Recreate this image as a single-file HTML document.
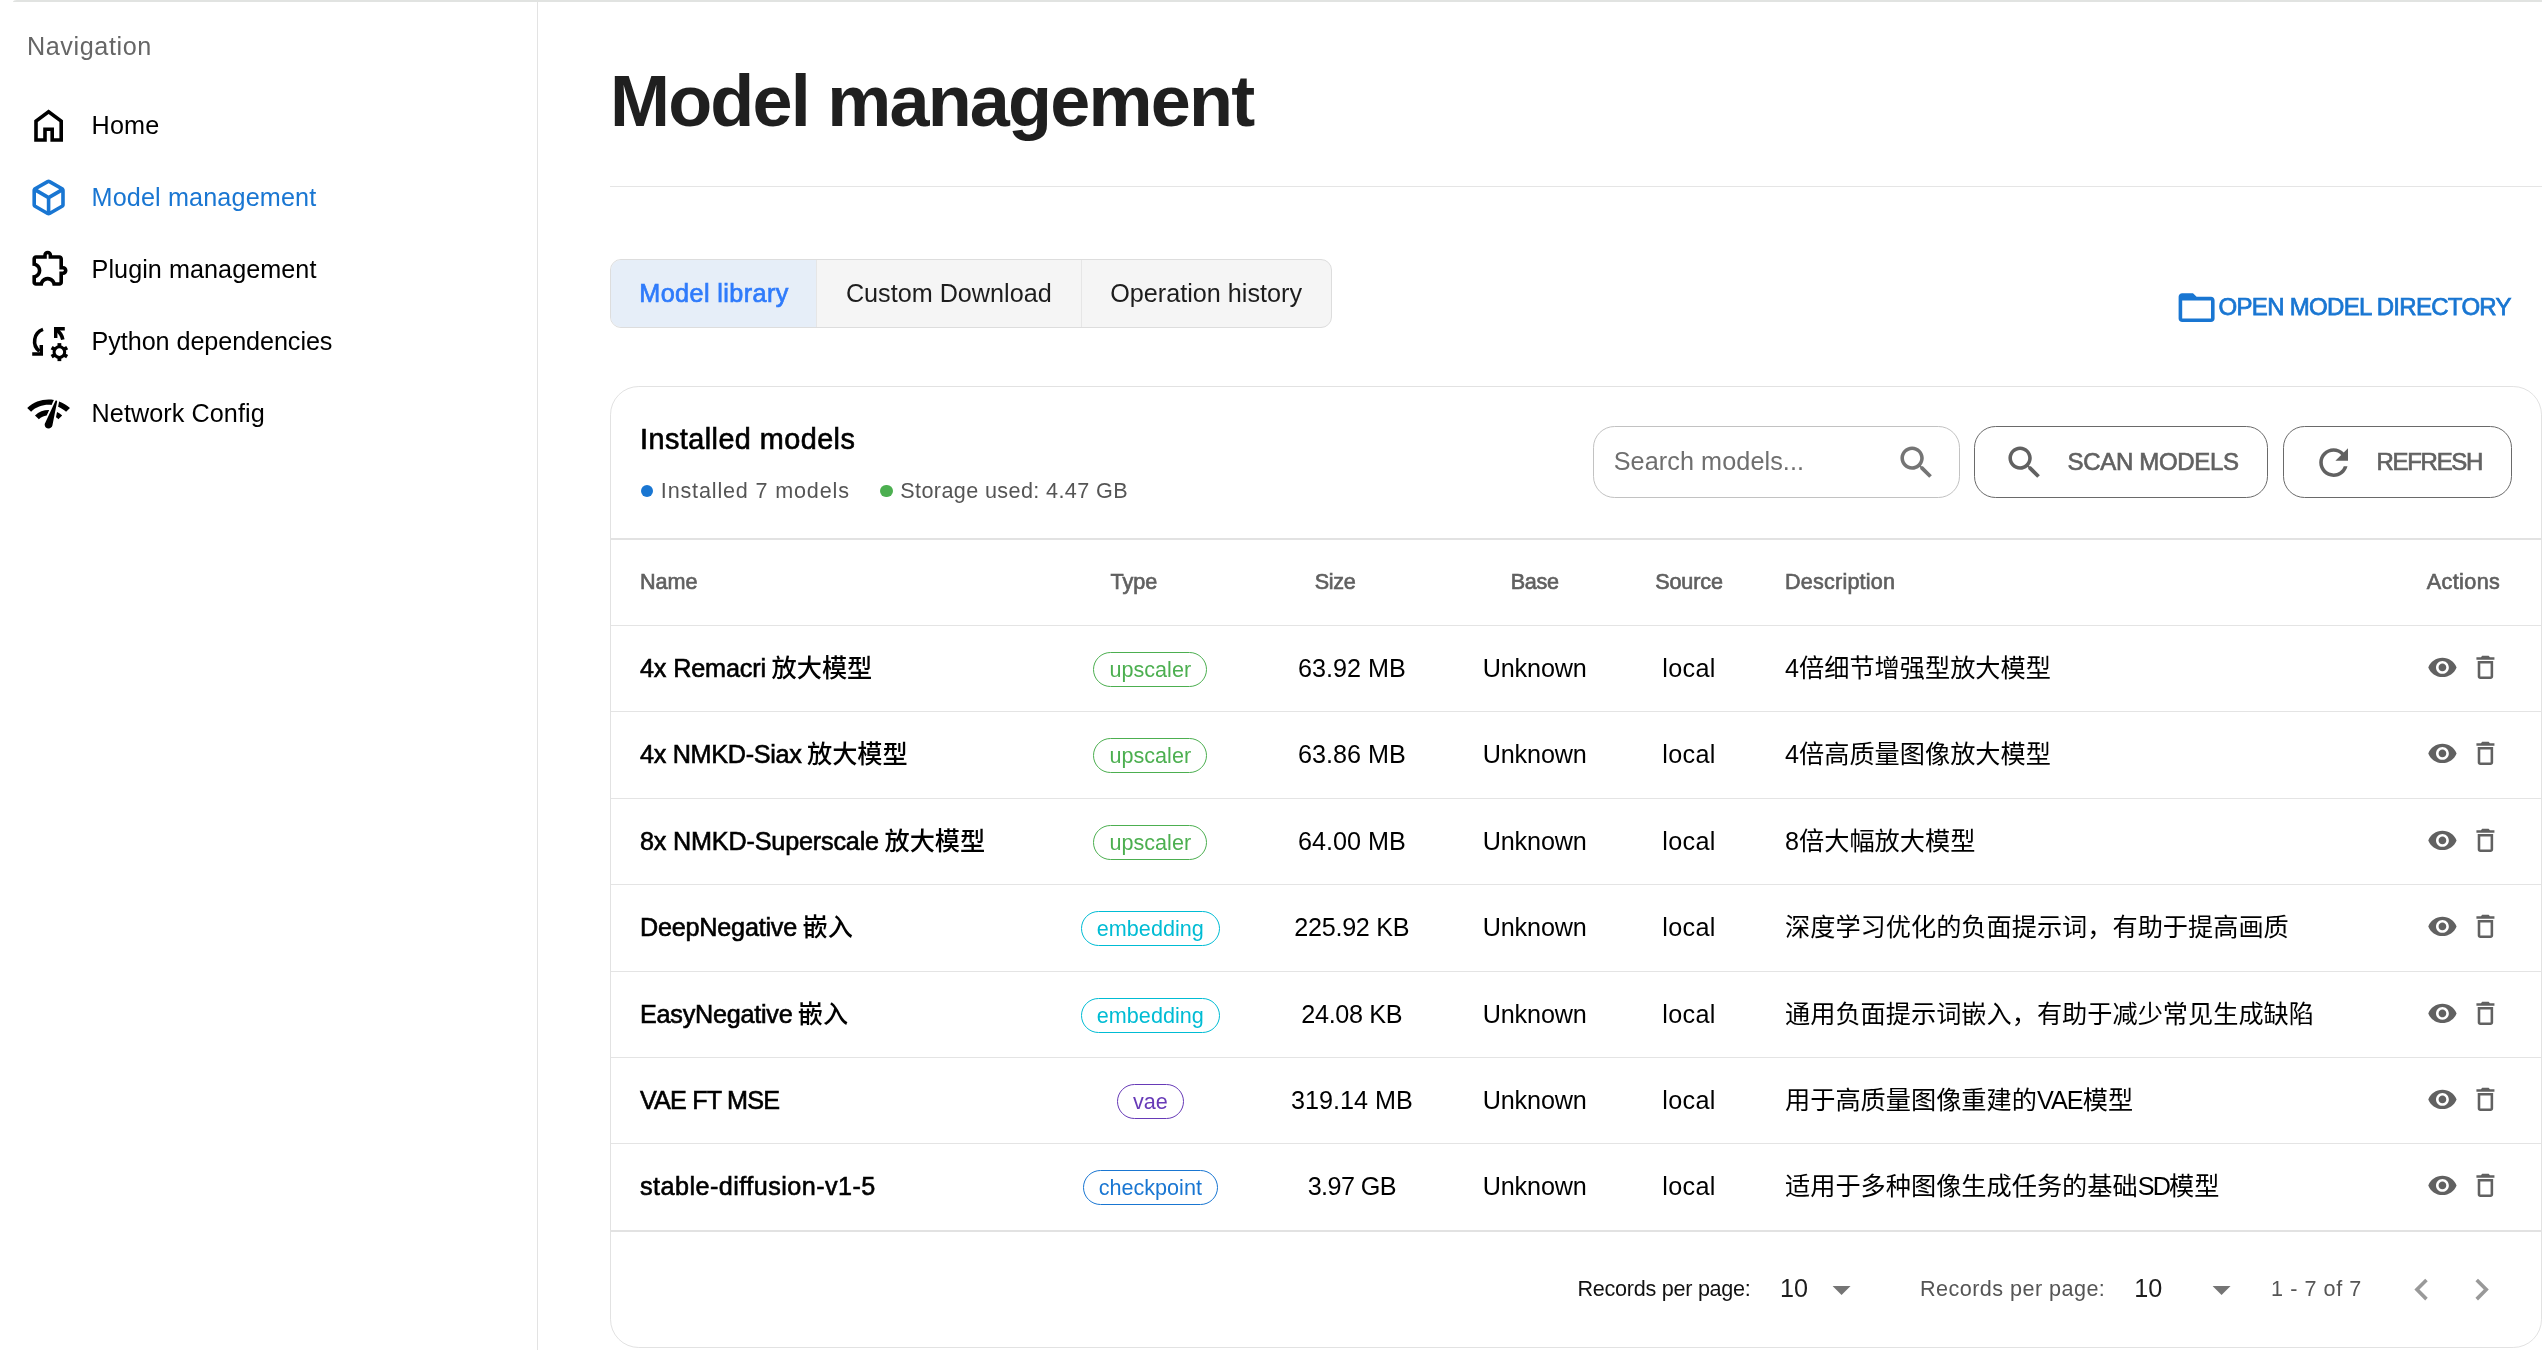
<!DOCTYPE html>
<html lang="en">
<head>
<meta charset="utf-8">
<title>Model management</title>
<style>
:root{
  --ff:"Liberation Sans","Noto Sans CJK SC",sans-serif;
  --primary:#1976d2;
}
*{box-sizing:border-box;margin:0;padding:0}
html,body{width:2542px;height:1350px;overflow:hidden;background:#fff}
body{font-family:var(--ff);color:#000;position:relative;-webkit-font-smoothing:antialiased;will-change:transform}
svg{display:block}
.abs{position:absolute}
.t{position:absolute;white-space:pre;line-height:1}
/* top bar */
.topbar{position:absolute;left:13px;top:0;right:0;height:2px;background:#e1e3e1;border-top-left-radius:4px 2px}
/* drawer */
.drawer{position:absolute;left:0;top:2px;width:538px;bottom:0;border-right:1px solid #e3e3e3;background:#fff}
.navhead{position:absolute;left:27px;top:28.5px;font-size:25.2px;line-height:30px;color:#666;letter-spacing:.58px;white-space:pre}
.nav{position:absolute;left:0;width:537px;height:72px}
.nav svg{position:absolute;left:26.8px;top:14.4px;width:43.2px;height:43.2px;fill:#000}
.nav span{position:absolute;left:91.6px;top:-1px;line-height:72px;font-size:25.2px;white-space:pre;color:#000}
.nav.on svg{fill:var(--primary)}
.nav.on span{color:var(--primary)}
/* main */
h1{position:absolute;left:610px;top:58.6px;font-size:72px;line-height:84px;font-weight:700;color:#1f1f1f;white-space:pre;letter-spacing:-1.8px}
.hr{position:absolute;left:610px;right:0;top:186px;height:1px;background:#e5e5e5}
.tabs{position:absolute;left:610px;top:259px;height:69px;display:flex;border:1px solid #ddd;border-radius:11px;overflow:hidden;background:#f5f5f5}
.tab{height:100%;display:flex;align-items:center;justify-content:center;font-size:25.2px;color:#1d1d1d;border-left:1px solid #e6e6e6;white-space:pre}
.tab:first-child{border-left:0}
.tab.on{background:#e6eef8;color:#2f7bfb;-webkit-text-stroke:.7px #2f7bfb;letter-spacing:.4px;justify-content:flex-start;padding-left:28.3px}
.opendir{position:absolute;left:2175.4px;top:274.9px;height:64.8px;display:flex;align-items:center;color:var(--primary);font-size:24px;-webkit-text-stroke:.75px var(--primary);letter-spacing:-.7px;white-space:pre}
.opendir svg{width:43.2px;height:43.2px;fill:var(--primary)}
/* card */
.card{position:absolute;left:610px;top:386px;width:1932px;height:962px;border:1px solid #e2e2e2;border-radius:28.8px;background:#fff}
.ctitle{position:absolute;left:640px;top:422.4px;font-size:28.8px;line-height:34px;color:#000;white-space:pre}
.med{-webkit-text-stroke:.65px currentColor}
.dot{position:absolute;width:12.6px;height:12.6px;border-radius:50%;top:484.6px}
.cap{position:absolute;top:477.5px;font-size:21.6px;line-height:26px;color:#555;white-space:pre}
.search{position:absolute;left:1593px;top:426px;width:367px;height:72px;border:1px solid #c2c2c2;border-radius:21.6px}
.search span{position:absolute;left:19.7px;top:-1px;line-height:70px;font-size:25.2px;color:#6f6f6f;white-space:pre}
.search svg{position:absolute;left:301px;top:13.5px;width:43.2px;height:43.2px;fill:#757575}
.btn{position:absolute;top:426px;height:72px;border:1px solid #6a6a6a;border-radius:21.6px;color:#616161;font-size:25.2px;white-space:pre}
.btn svg{position:absolute;left:27.7px;top:13.5px;width:43.2px;height:43.2px;fill:#616161}
.btn span{position:absolute;left:92.5px;top:0;line-height:70px}
.hline{position:absolute;left:611px;width:1930px;height:2px;background:#e2e2e2}
.th{position:absolute;top:539px;height:86px;line-height:86px;font-size:21.6px;color:#606060;white-space:pre}
.row{position:absolute;left:611px;width:1930px;height:86.4px;border-top:1px solid #e4e4e4;font-size:25.2px;line-height:86.4px;color:#000}
.c{position:absolute;top:-.8px;height:86.4px;white-space:pre}
.name{left:29px}.name .l{-webkit-text-stroke:.6px #000}.name .k{font-weight:500;margin-left:-1.3px}
.type{left:439.3px;width:200px;text-align:center}
.size{left:640.8px;width:200px;text-align:center}
.base{left:823.7px;width:200px;text-align:center;letter-spacing:-.13px}
.src{left:978px;width:200px;text-align:center;letter-spacing:.34px}
.desc{left:1174px}
.chip{display:inline-block;vertical-align:top;margin-top:27px;height:35px;line-height:34px;border:1px solid;border-radius:18px;padding:0 15px;font-size:21.6px}
.up{color:#4caf50}.em{color:#00bcd4}.va{color:#673ab7}.ck{color:#1976d2}
.row svg{position:absolute;fill:#616161;width:30.87px;height:30.87px;top:26px}
.eye{left:1815.7px}.del{left:1858.7px}
.bt{position:absolute;top:1231px;height:116px;line-height:116px;white-space:pre}
.bsvg{position:absolute;width:43.2px;height:43.2px;top:1267.5px}
</style>
</head>
<body>
<div class="topbar"></div>
<aside class="drawer">
  <div class="navhead">Navigation</div>
  <div class="nav" style="top:87.5px"><svg viewBox="0 0 24 24"><path d="M6 19h3v-6h6v6h3v-9l-6-4.5L6 10Zm-2 2V9l8-6 8 6v12h-7v-6h-2v6Z"/></svg><span style="letter-spacing:.15px">Home</span></div>
  <div class="nav on" style="top:159.5px"><svg viewBox="0 -960 960 960"><path d="M440-183v-274L200-596v274l240 139Zm80 0 240-139v-274L520-457v274Zm-40-343 237-137-237-137-237 137 237 137ZM160-252q-19-11-29.5-29T120-321v-318q0-22 10.5-40t29.5-29l280-161q19-11 40-11t40 11l280 161q19 11 29.5 29t10.5 40v318q0 22-10.5 40T800-252L520-91q-19 11-40 11t-40-11L160-252Zm320-228Z"/></svg><span style="letter-spacing:.13px">Model management</span></div>
  <div class="nav" style="top:231.5px"><svg viewBox="0 -960 960 960"><path d="M352-120H200q-33 0-56.500-23.500T120-200v-152q48 0 84-30.500t36-77.500q0-47-36-77.500T120-568v-152q0-33 23.500-56.500T200-800h160q0-42 29-71t71-29q42 0 71 29t29 71h160q33 0 56.500 23.500T800-720v160q42 0 71 29t29 71q0 42-29 71t-71 29v160q0 33-23.500 56.500T720-120H568q0-50-31.500-85T460-240q-45 0-76.500 35T352-120Zm-152-80h85q24-66 77-93t98-27q45 0 98 27t77 93h85v-240h80q8 0 14-6t6-14q0-8-6-14t-14-6h-80v-240H480v-80q0-8-6-14t-14-6q-8 0-14 6t-6 14v80H200v88q54 20 87 67t33 105q0 57-33 104t-87 68v88Zm260-260Z"/></svg><span style="letter-spacing:.05px">Plugin management</span></div>
  <div class="nav" style="top:303.5px"><svg viewBox="0 0 24 24"><path d="M8.9 5.2A7 7 0 0 0 6.9 17.3" fill="none" stroke="#000" stroke-width="2"/><path d="M2.9 17.9H7V13.9H8.9V19.9H2.9Z"/><path d="M15 3.95H21V5.8H16.9V9.95H15Z"/><path d="M16.3 5.3Q19.3 7.6 19.9 10.9" fill="none" stroke="#000" stroke-width="2"/><g transform="translate(18 17.85)"><circle r="2.95" fill="none" stroke="#000" stroke-width="1.7"/><rect x="-1.05" y="-5" width="2.1" height="2" transform="rotate(0)"/><rect x="-1.05" y="-5" width="2.1" height="2" transform="rotate(60)"/><rect x="-1.05" y="-5" width="2.1" height="2" transform="rotate(120)"/><rect x="-1.05" y="-5" width="2.1" height="2" transform="rotate(180)"/><rect x="-1.05" y="-5" width="2.1" height="2" transform="rotate(240)"/><rect x="-1.05" y="-5" width="2.1" height="2" transform="rotate(300)"/></g></svg><span style="letter-spacing:-.08px">Python dependencies</span></div>
  <div class="nav" style="top:375.5px"><svg viewBox="0 0 24 24" style="transform:scale(1.08,1.03)"><path d="M15.9 5c-.17 0-.32.09-.41.23l-.07.15-5.180 11.650c-.16.29-.26.61-.26.96 0 1.110.9 2.010 2.010 2.010.96 0 1.770-.68 1.960-1.590l.01-.03L16.400 5.500c0-.28-.22-.5-.5-.5zM1 9l2 2c2.880-2.880 6.790-4.080 10.530-3.620l1.190-2.680C9.890 3.840 4.740 5.270 1 9zm20 2l2-2c-1.640-1.640-3.550-2.820-5.590-3.570l-.53 2.820c1.500.62 2.900 1.530 4.120 2.750zm-4 4l2-2c-.8-.8-1.700-1.420-2.660-1.890l-.55 2.920c.42.27.83.59 1.210.97zM5 13l2 2c1.130-1.130 2.560-1.790 4.030-2l1.280-2.880c-2.630-.08-5.300.87-7.310 2.880z"/></svg><span style="letter-spacing:.07px">Network Config</span></div>
</aside>
<h1>Model management</h1>
<div class="hr"></div>
<div class="tabs">
  <div class="tab on" style="width:205px">Model library</div>
  <div class="tab" style="width:264.6px">Custom Download</div>
  <div class="tab" style="width:250px">Operation history</div>
</div>
<div class="opendir"><svg viewBox="0 0 24 24"><path d="M20 6h-8l-2-2H4c-1.100 0-1.990.9-1.990 2L2 18c0 1.100.9 2 2 2h16c1.100 0 2-.9 2-2V8c0-1.100-.9-2-2-2zm0 12H4V8h16v10z"/></svg><span>OPEN MODEL DIRECTORY</span></div>
<div class="card"></div>
<div class="ctitle med" style="letter-spacing:.45px">Installed models</div>
<div class="dot" style="left:640.5px;background:#1976d2"></div>
<div class="cap" style="left:660.8px;letter-spacing:.83px">Installed 7 models</div>
<div class="dot" style="left:880px;background:#4caf50"></div>
<div class="cap" style="left:900.3px;letter-spacing:.38px">Storage used: 4.47 GB</div>
<div class="search"><span style="letter-spacing:.09px">Search models...</span><svg viewBox="0 0 24 24"><path d="M15.5 14h-.79l-.28-.27C15.410 12.590 16 11.110 16 9.500 16 5.910 13.090 3 9.500 3S3 5.910 3 9.500 5.910 16 9.500 16c1.610 0 3.090-.59 4.230-1.570l.27.28v.79l5 4.990L20.490 19l-4.990-5zm-6 0C7.010 14 5 11.990 5 9.500S7.010 5 9.500 5 14 7.010 14 9.500 11.990 14 9.500 14z"/></svg></div>
<div class="btn" style="left:1974px;width:293.7px"><svg viewBox="0 0 24 24"><path d="M15.5 14h-.79l-.28-.27C15.410 12.590 16 11.110 16 9.500 16 5.910 13.090 3 9.500 3S3 5.910 3 9.500 5.910 16 9.500 16c1.610 0 3.090-.59 4.230-1.570l.27.28v.79l5 4.990L20.490 19l-4.990-5zm-6 0C7.010 14 5 11.990 5 9.500S7.010 5 9.500 5 14 7.010 14 9.500 11.990 14 9.500 14z"/></svg><span class="med" style="font-size:24px;letter-spacing:-.32px">SCAN MODELS</span></div>
<div class="btn" style="left:2283px;width:228.8px"><svg viewBox="0 0 24 24"><path d="M17.65 6.350C16.200 4.900 14.210 4 12 4c-4.420 0-7.990 3.580-7.990 8s3.570 8 7.990 8c3.730 0 6.840-2.550 7.730-6h-2.080c-.82 2.330-3.040 4-5.650 4-3.310 0-6-2.690-6-6s2.690-6 6-6c1.660 0 3.140.69 4.220 1.780L13 11h7V4l-2.350 2.350z"/></svg><span class="med" style="font-size:24px;letter-spacing:-1.3px">REFRESH</span></div>
<div class="hline" style="top:538px"></div>
<div class="th med" style="left:640px">Name</div>
<div class="th med" style="left:1110.4px">Type</div>
<div class="th med" style="left:1314.7px;letter-spacing:-.29px">Size</div>
<div class="th med" style="left:1510.7px;letter-spacing:-.31px">Base</div>
<div class="th med" style="left:1655.2px;letter-spacing:-.13px">Source</div>
<div class="th med" style="left:1785px;letter-spacing:.2px">Description</div>
<div class="th med" style="left:2426.7px;letter-spacing:.4px">Actions</div>
<div class="row" style="top:625px"><div class="c name"><span class="l" style="letter-spacing:-0.14px">4x Remacri </span><span class=k>放大模型</span></div><div class="c type"><span class="chip up">upscaler</span></div><div class="c size">63.92 MB</div><div class="c base">Unknown</div><div class="c src">local</div><div class="c desc">4倍细节增强型放大模型</div><svg class="eye" viewBox="0 0 24 24"><path d="M12 4.5C7 4.5 2.73 7.61 1 12c1.73 4.39 6 7.5 11 7.5s9.27-3.11 11-7.5c-1.73-4.39-6-7.5-11-7.5zM12 17c-2.76 0-5-2.24-5-5s2.24-5 5-5 5 2.24 5 5-2.24 5-5 5zm0-8c-1.66 0-3 1.34-3 3s1.34 3 3 3 3-1.34 3-3-1.34-3-3-3z"/></svg><svg class="del" viewBox="0 0 24 24"><path d="M6 19c0 1.1.9 2 2 2h8c1.1 0 2-.9 2-2V7H6v12zM8 9h8v10H8V9zm7.5-5l-1-1h-5l-1 1H5v2h14V4h-3.5z"/></svg></div>
<div class="row" style="top:711px"><div class="c name"><span class="l" style="letter-spacing:-0.3px">4x NMKD-Siax </span><span class=k>放大模型</span></div><div class="c type"><span class="chip up">upscaler</span></div><div class="c size">63.86 MB</div><div class="c base">Unknown</div><div class="c src">local</div><div class="c desc">4倍高质量图像放大模型</div><svg class="eye" viewBox="0 0 24 24"><path d="M12 4.5C7 4.5 2.73 7.61 1 12c1.73 4.39 6 7.5 11 7.5s9.27-3.11 11-7.5c-1.73-4.39-6-7.5-11-7.5zM12 17c-2.76 0-5-2.24-5-5s2.24-5 5-5 5 2.24 5 5-2.24 5-5 5zm0-8c-1.66 0-3 1.34-3 3s1.34 3 3 3 3-1.34 3-3-1.34-3-3-3z"/></svg><svg class="del" viewBox="0 0 24 24"><path d="M6 19c0 1.1.9 2 2 2h8c1.1 0 2-.9 2-2V7H6v12zM8 9h8v10H8V9zm7.5-5l-1-1h-5l-1 1H5v2h14V4h-3.5z"/></svg></div>
<div class="row" style="top:798px"><div class="c name"><span class="l" style="letter-spacing:-0.18px">8x NMKD-Superscale </span><span class=k>放大模型</span></div><div class="c type"><span class="chip up">upscaler</span></div><div class="c size">64.00 MB</div><div class="c base">Unknown</div><div class="c src">local</div><div class="c desc">8倍大幅放大模型</div><svg class="eye" viewBox="0 0 24 24"><path d="M12 4.5C7 4.5 2.73 7.61 1 12c1.73 4.39 6 7.5 11 7.5s9.27-3.11 11-7.5c-1.73-4.39-6-7.5-11-7.5zM12 17c-2.76 0-5-2.24-5-5s2.24-5 5-5 5 2.24 5 5-2.24 5-5 5zm0-8c-1.66 0-3 1.34-3 3s1.34 3 3 3 3-1.34 3-3-1.34-3-3-3z"/></svg><svg class="del" viewBox="0 0 24 24"><path d="M6 19c0 1.1.9 2 2 2h8c1.1 0 2-.9 2-2V7H6v12zM8 9h8v10H8V9zm7.5-5l-1-1h-5l-1 1H5v2h14V4h-3.5z"/></svg></div>
<div class="row" style="top:884px"><div class="c name"><span class="l" style="letter-spacing:-0.22px">DeepNegative </span><span class=k>嵌入</span></div><div class="c type"><span class="chip em">embedding</span></div><div class="c size" style="letter-spacing:-0.27px">225.92 KB</div><div class="c base">Unknown</div><div class="c src">local</div><div class="c desc">深度学习优化的负面提示词，有助于提高画质</div><svg class="eye" viewBox="0 0 24 24"><path d="M12 4.5C7 4.5 2.73 7.61 1 12c1.73 4.39 6 7.5 11 7.5s9.27-3.11 11-7.5c-1.73-4.39-6-7.5-11-7.5zM12 17c-2.76 0-5-2.24-5-5s2.24-5 5-5 5 2.24 5 5-2.24 5-5 5zm0-8c-1.66 0-3 1.34-3 3s1.34 3 3 3 3-1.34 3-3-1.34-3-3-3z"/></svg><svg class="del" viewBox="0 0 24 24"><path d="M6 19c0 1.1.9 2 2 2h8c1.1 0 2-.9 2-2V7H6v12zM8 9h8v10H8V9zm7.5-5l-1-1h-5l-1 1H5v2h14V4h-3.5z"/></svg></div>
<div class="row" style="top:971px"><div class="c name"><span class="l" style="letter-spacing:-0.25px">EasyNegative </span><span class=k>嵌入</span></div><div class="c type"><span class="chip em">embedding</span></div><div class="c size" style="letter-spacing:-0.33px">24.08 KB</div><div class="c base">Unknown</div><div class="c src">local</div><div class="c desc">通用负面提示词嵌入，有助于减少常见生成缺陷</div><svg class="eye" viewBox="0 0 24 24"><path d="M12 4.5C7 4.5 2.73 7.61 1 12c1.73 4.39 6 7.5 11 7.5s9.27-3.11 11-7.5c-1.73-4.39-6-7.5-11-7.5zM12 17c-2.76 0-5-2.24-5-5s2.24-5 5-5 5 2.24 5 5-2.24 5-5 5zm0-8c-1.66 0-3 1.34-3 3s1.34 3 3 3 3-1.34 3-3-1.34-3-3-3z"/></svg><svg class="del" viewBox="0 0 24 24"><path d="M6 19c0 1.1.9 2 2 2h8c1.1 0 2-.9 2-2V7H6v12zM8 9h8v10H8V9zm7.5-5l-1-1h-5l-1 1H5v2h14V4h-3.5z"/></svg></div>
<div class="row" style="top:1057px"><div class="c name"><span class="l" style="letter-spacing:-0.83px">VAE FT MSE</span></div><div class="c type"><span class="chip va">vae</span></div><div class="c size">319.14 MB</div><div class="c base">Unknown</div><div class="c src">local</div><div class="c desc">用于高质量图像重建的<span style="letter-spacing:-.88px">VAE</span>模型</div><svg class="eye" viewBox="0 0 24 24"><path d="M12 4.5C7 4.5 2.73 7.61 1 12c1.73 4.39 6 7.5 11 7.5s9.27-3.11 11-7.5c-1.73-4.39-6-7.5-11-7.5zM12 17c-2.76 0-5-2.24-5-5s2.24-5 5-5 5 2.24 5 5-2.24 5-5 5zm0-8c-1.66 0-3 1.34-3 3s1.34 3 3 3 3-1.34 3-3-1.34-3-3-3z"/></svg><svg class="del" viewBox="0 0 24 24"><path d="M6 19c0 1.1.9 2 2 2h8c1.1 0 2-.9 2-2V7H6v12zM8 9h8v10H8V9zm7.5-5l-1-1h-5l-1 1H5v2h14V4h-3.5z"/></svg></div>
<div class="row" style="top:1143px"><div class="c name"><span class="l" style="letter-spacing:0.45px">stable-diffusion-v1-5</span></div><div class="c type"><span class="chip ck">checkpoint</span></div><div class="c size" style="letter-spacing:-0.6px">3.97 GB</div><div class="c base">Unknown</div><div class="c src">local</div><div class="c desc">适用于多种图像生成任务的基础<span style="letter-spacing:-1.76px">SD</span>模型</div><svg class="eye" viewBox="0 0 24 24"><path d="M12 4.5C7 4.5 2.73 7.61 1 12c1.73 4.39 6 7.5 11 7.5s9.27-3.11 11-7.5c-1.73-4.39-6-7.5-11-7.5zM12 17c-2.76 0-5-2.24-5-5s2.24-5 5-5 5 2.24 5 5-2.24 5-5 5zm0-8c-1.66 0-3 1.34-3 3s1.34 3 3 3 3-1.34 3-3-1.34-3-3-3z"/></svg><svg class="del" viewBox="0 0 24 24"><path d="M6 19c0 1.1.9 2 2 2h8c1.1 0 2-.9 2-2V7H6v12zM8 9h8v10H8V9zm7.5-5l-1-1h-5l-1 1H5v2h14V4h-3.5z"/></svg></div>
<div class="hline" style="top:1230px"></div>
<div class="bt" style="left:1577.5px;font-size:21.6px;color:#111;letter-spacing:-.27px">Records per page:</div>
<div class="bt" style="left:1780px;top:1230px;font-size:25.2px;color:#1d1d1d">10</div>
<svg class="bsvg" style="left:1820.4px;fill:#757575" viewBox="0 0 24 24"><path d="M7 10l5 5 5-5z"/></svg>
<div class="bt" style="left:1920px;font-size:21.6px;color:#555;letter-spacing:.45px">Records per page:</div>
<div class="bt" style="left:2134.3px;top:1230px;font-size:25.2px;color:#1d1d1d">10</div>
<svg class="bsvg" style="left:2200.2px;fill:#757575" viewBox="0 0 24 24"><path d="M7 10l5 5 5-5z"/></svg>
<div class="bt" style="left:2271px;font-size:21.6px;color:#555;letter-spacing:.56px">1 - 7 of 7</div>
<svg class="bsvg" style="left:2400.2px;fill:#999" viewBox="0 0 24 24"><path d="M15.41 7.41L14 6l-6 6 6 6 1.41-1.41L10.83 12z"/></svg>
<svg class="bsvg" style="left:2460.3px;fill:#999" viewBox="0 0 24 24"><path d="M10 6L8.59 7.41 13.17 12l-4.58 4.59L10 18l6-6z"/></svg>

</body>
</html>
